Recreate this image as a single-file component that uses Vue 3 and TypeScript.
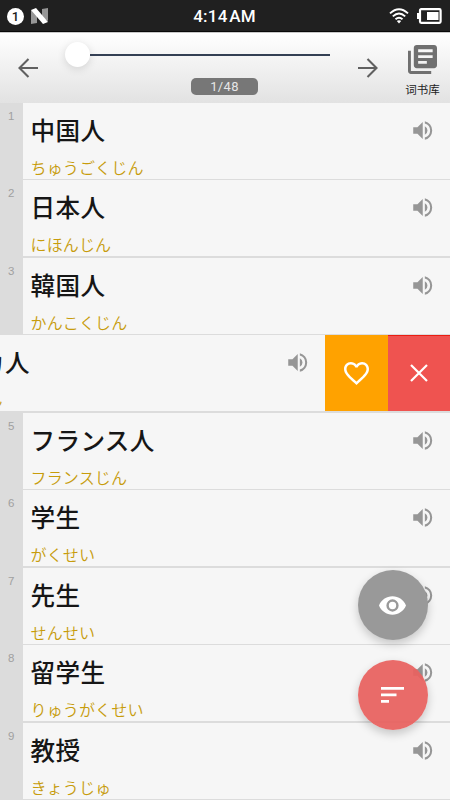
<script setup lang="ts">
interface Word {
  id: number
  term: string
  reading: string
  open?: boolean
}

const words: Word[] = [
  { id: 1, term: '中国人', reading: 'ちゅうごくじん' },
  { id: 2, term: '日本人', reading: 'にほんじん' },
  { id: 3, term: '韓国人', reading: 'かんこくじん' },
  { id: 4, term: 'アメリカ人', reading: 'アメリカじん', open: true },
  { id: 5, term: 'フランス人', reading: 'フランスじん' },
  { id: 6, term: '学生', reading: 'がくせい' },
  { id: 7, term: '先生', reading: 'せんせい' },
  { id: 8, term: '留学生', reading: 'りゅうがくせい' },
  { id: 9, term: '教授', reading: 'きょうじゅ' },
]
</script>

<template>
  <div class="screen">
    <header class="status">
      <div class="status-left">
        <span class="notice">1</span>
        <svg class="n-logo" viewBox="0 0 17 17">
          <path d="M0 2 6 5V15L0 16ZM11 1 17 0V13L11 10Z" fill="#969696" />
          <path d="M0 2 5 0 17 14 12 16Z" fill="#fff" />
        </svg>
      </div>
      <span class="clock">4:14 AM</span>
      <div class="status-right">
        <svg class="wifi" viewBox="0 0 20 16" fill="none" stroke="#fff" stroke-width="1.9">
          <path d="M1 5.4Q10-2.8 19 5.4M3.8 8.4Q10 2.8 16.2 8.4M6.5 11.3Q10 8 13.5 11.3" />
          <path d="M7.8 13 10 15.6 12.2 13Q10 11.5 7.8 13Z" fill="#fff" stroke="none" />
        </svg>
        <svg class="battery" viewBox="0 0 25 16">
          <rect x="3" y="1.2" width="20.6" height="13.6" rx="1.2" fill="none" stroke="#fff" stroke-width="2.2" />
          <path d="M0 5h3v6H0ZM10 4h11.5v8H10Z" fill="#fff" />
        </svg>
      </div>
    </header>

    <nav class="toolbar">
      <svg class="arrow prev" viewBox="0 0 20 20"><path d="M20 10H1.5M10.5 1 1.5 10 10.5 19" /></svg>
      <div class="progress">
        <div class="slider"><span class="thumb"></span><span class="track"></span></div>
        <span class="count">1/48</span>
      </div>
      <svg class="arrow next" viewBox="0 0 20 20"><path d="M0 10H18.5M9.5 1 18.5 10 9.5 19" /></svg>
      <div class="library">
        <svg viewBox="2 2 20 20">
          <path d="M4 6H2v14c0 1.1.9 2 2 2h14v-2H4V6zm16-4H8c-1.1 0-2 .9-2 2v12c0 1.1.9 2 2 2h12c1.1 0 2-.9 2-2V4c0-1.1-.9-2-2-2zm-1 9H9V9h10v2zm-4 4H9v-2h6v2zm4-8H9V5h10v2z" />
        </svg>
        <span>词书库</span>
      </div>
    </nav>

    <main class="list">
      <section v-for="word in words" :key="word.id" class="row" :class="{ open: word.open }">
        <span class="index">{{ word.id }}</span>
        <div class="body">
          <div class="text">
            <div class="term" lang="ja">{{ word.term }}</div>
            <div class="reading" lang="ja">{{ word.reading }}</div>
          </div>
          <svg class="speaker" viewBox="3 3 18.5 18">
            <path d="M3 9v6h4l5 5V4L7 9H3zm13.5 3A4.5 4.5 0 0 0 14 7.97v8.05A4.47 4.47 0 0 0 16.5 12zM14 3.23v2.06a7 7 0 0 1 0 13.42v2.06a9 9 0 0 0 0-17.54z" />
          </svg>
        </div>
        <div v-if="word.open" class="actions">
          <div class="like">
            <svg viewBox="2 3 20 18.35"><path d="M16.5 3c-1.74 0-3.41.81-4.5 2.09C10.91 3.81 9.24 3 7.5 3 4.42 3 2 5.42 2 8.5c0 3.78 3.4 6.86 8.55 11.54L12 21.35l1.45-1.32C18.6 15.36 22 12.28 22 8.5 22 5.42 19.58 3 16.5 3zm-4.4 15.55-.1.1-.1-.1C7.14 14.24 4 11.39 4 8.5 4 6.5 5.5 5 7.5 5c1.54 0 3.04.99 3.57 2.36h1.87C13.46 5.99 14.96 5 16.5 5c2 0 3.5 1.5 3.5 3.5 0 2.89-3.14 5.74-7.9 10.05z" /></svg>
          </div>
          <div class="remove">
            <svg viewBox="0 0 18 18"><path d="M1 1 17 17M17 1 1 17" /></svg>
          </div>
        </div>
      </section>
    </main>

    <div class="fabs">
      <div class="fab view">
        <svg viewBox="1 4.5 22 15"><path d="M12 4.5C7 4.5 2.73 7.61 1 12c1.73 4.39 6 7.5 11 7.5s9.27-3.11 11-7.5c-1.73-4.39-6-7.5-11-7.5zM12 17a5 5 0 1 1 0-10 5 5 0 0 1 0 10zm0-8a3 3 0 1 0 0 6 3 3 0 0 0 0-6z" /></svg>
      </div>
      <div class="fab sort">
        <svg viewBox="0 0 23 16"><path d="M0 0H23V2.7H0ZM0 6.6H15.5V9.3H0ZM0 13H8V15.7H0Z" /></svg>
      </div>
    </div>
  </div>
</template>

<style>
body {
  margin: 0;
}
</style>

<style scoped>
.screen {
  position: relative;
  width: 450px;
  height: 800px;
  overflow: hidden;
  background: #dcdcdc;
  font-family: Roboto, "Noto Sans CJK JP", sans-serif;
}
svg {
  display: block;
  flex: none;
}
.status {
  display: grid;
  grid-template-columns: 1fr auto 1fr;
  align-items: center;
  box-sizing: border-box;
  height: 32px;
  padding: 1px 8px 0 7px;
  background: #202020;
  border-bottom: 1px solid #090909;
  color: #fff;
}
.status-left,
.status-right {
  display: flex;
  align-items: center;
}
.status-left {
  gap: 7px;
}
.status-right {
  justify-content: flex-end;
  gap: 8px;
}
.notice {
  width: 17px;
  height: 17px;
  border-radius: 50%;
  background: #fff;
  color: #202020;
  font: 500 13px/17px Roboto, sans-serif;
  text-align: center;
}
.n-logo {
  width: 17px;
  height: 17px;
}
.clock {
  font-size: 17px;
  font-weight: 500;
  letter-spacing: 0.25px;
  word-spacing: -3px;
}
.wifi {
  width: 20px;
  height: 16px;
}
.battery {
  width: 25px;
  height: 16px;
}
.toolbar {
  display: flex;
  box-sizing: border-box;
  height: 70.5px;
  padding: 0 9px 0 18px;
  border-top: 1px solid #c9c9c9;
  background: linear-gradient(#fff, #e2e2e2);
}
.arrow {
  width: 20px;
  height: 20px;
  margin-top: 24.5px;
  fill: none;
  stroke: #606060;
  stroke-width: 2.1;
}
.progress {
  display: flex;
  flex-direction: column;
  align-items: center;
  width: 265px;
  margin: 9px 27.5px 0 27px;
}
.slider {
  display: flex;
  align-items: center;
  width: 100%;
}
.thumb {
  width: 25px;
  height: 25px;
  border-radius: 50%;
  background: #fff;
  box-shadow: 0 2px 8px rgba(0, 0, 0, 0.13);
}
.track {
  flex: 1;
  height: 2px;
  background: #344054;
}
.count {
  width: 67px;
  height: 17px;
  margin-top: 11px;
  margin-left: 54px;
  border-radius: 5px;
  background: #777;
  color: #e6e6e6;
  font-size: 13px;
  line-height: 18px;
  letter-spacing: 0.3px;
  text-align: center;
}
.library {
  display: flex;
  flex-direction: column;
  align-items: center;
  width: 37px;
  margin-left: auto;
  padding-top: 12px;
  color: #222;
  font: 11.5px/16px "Noto Sans CJK SC", sans-serif;
  white-space: nowrap;
}
.library svg {
  width: 29px;
  height: 29px;
  margin-bottom: 7px;
  fill: #707070;
}
.list {
  display: grid;
  grid-auto-rows: 76px;
  row-gap: 1.53px;
}
.row {
  display: flex;
  overflow: hidden;
  width: 450px;
}
.index {
  flex: none;
  width: 22.5px;
  padding-top: 6px;
  color: #a0a0a0;
  font: 11.5px/14px "Liberation Sans", sans-serif;
  text-align: center;
}
.body {
  display: flex;
  flex: none;
  justify-content: space-between;
  box-sizing: border-box;
  width: 427.5px;
  padding: 0 17.5px 0 8px;
  background: #f6f6f6;
}
.term {
  margin-top: 11px;
  color: #161616;
  font-size: 24.6px;
  font-weight: 500;
  line-height: 36px;
  letter-spacing: 0.35px;
  white-space: nowrap;
}
.reading {
  margin-top: 8px;
  color: #c79c0c;
  font-size: 16px;
  font-weight: 350;
  line-height: 22px;
  letter-spacing: 0.15px;
  white-space: nowrap;
}
.speaker {
  width: 20px;
  height: 19px;
  margin-top: 18px;
  fill: #969696;
}
.open .index {
  margin-left: -125px;
}
.open .text {
  margin-left: 1px;
}
.actions {
  display: flex;
  flex: none;
  width: 125px;
}
.like,
.remove {
  display: flex;
  flex: 1;
  align-items: center;
  justify-content: center;
}
.like {
  background: #ffa200;
}
.like svg {
  width: 25px;
  height: 23px;
  fill: #fff;
}
.remove {
  background: #ef5350;
  box-shadow: inset 0 1px #ea1e12;
}
.remove svg {
  width: 18px;
  height: 18px;
  fill: none;
  stroke: #fff;
  stroke-width: 2.2;
}
.fabs {
  position: absolute;
  right: 22.5px;
  bottom: 70px;
  display: flex;
  flex-direction: column;
  gap: 20px;
}
.fab {
  display: flex;
  align-items: center;
  justify-content: center;
  width: 70px;
  height: 70px;
  border-radius: 50%;
  box-shadow: 0 4px 10px rgba(0, 0, 0, 0.2);
}
.fab svg {
  fill: #fff;
}
.view {
  background: #999;
}
.view svg {
  width: 27px;
  height: 19px;
}
.sort {
  background: rgba(232, 98, 96, 0.94);
}
.sort svg {
  width: 23px;
  height: 16px;
}
</style>
